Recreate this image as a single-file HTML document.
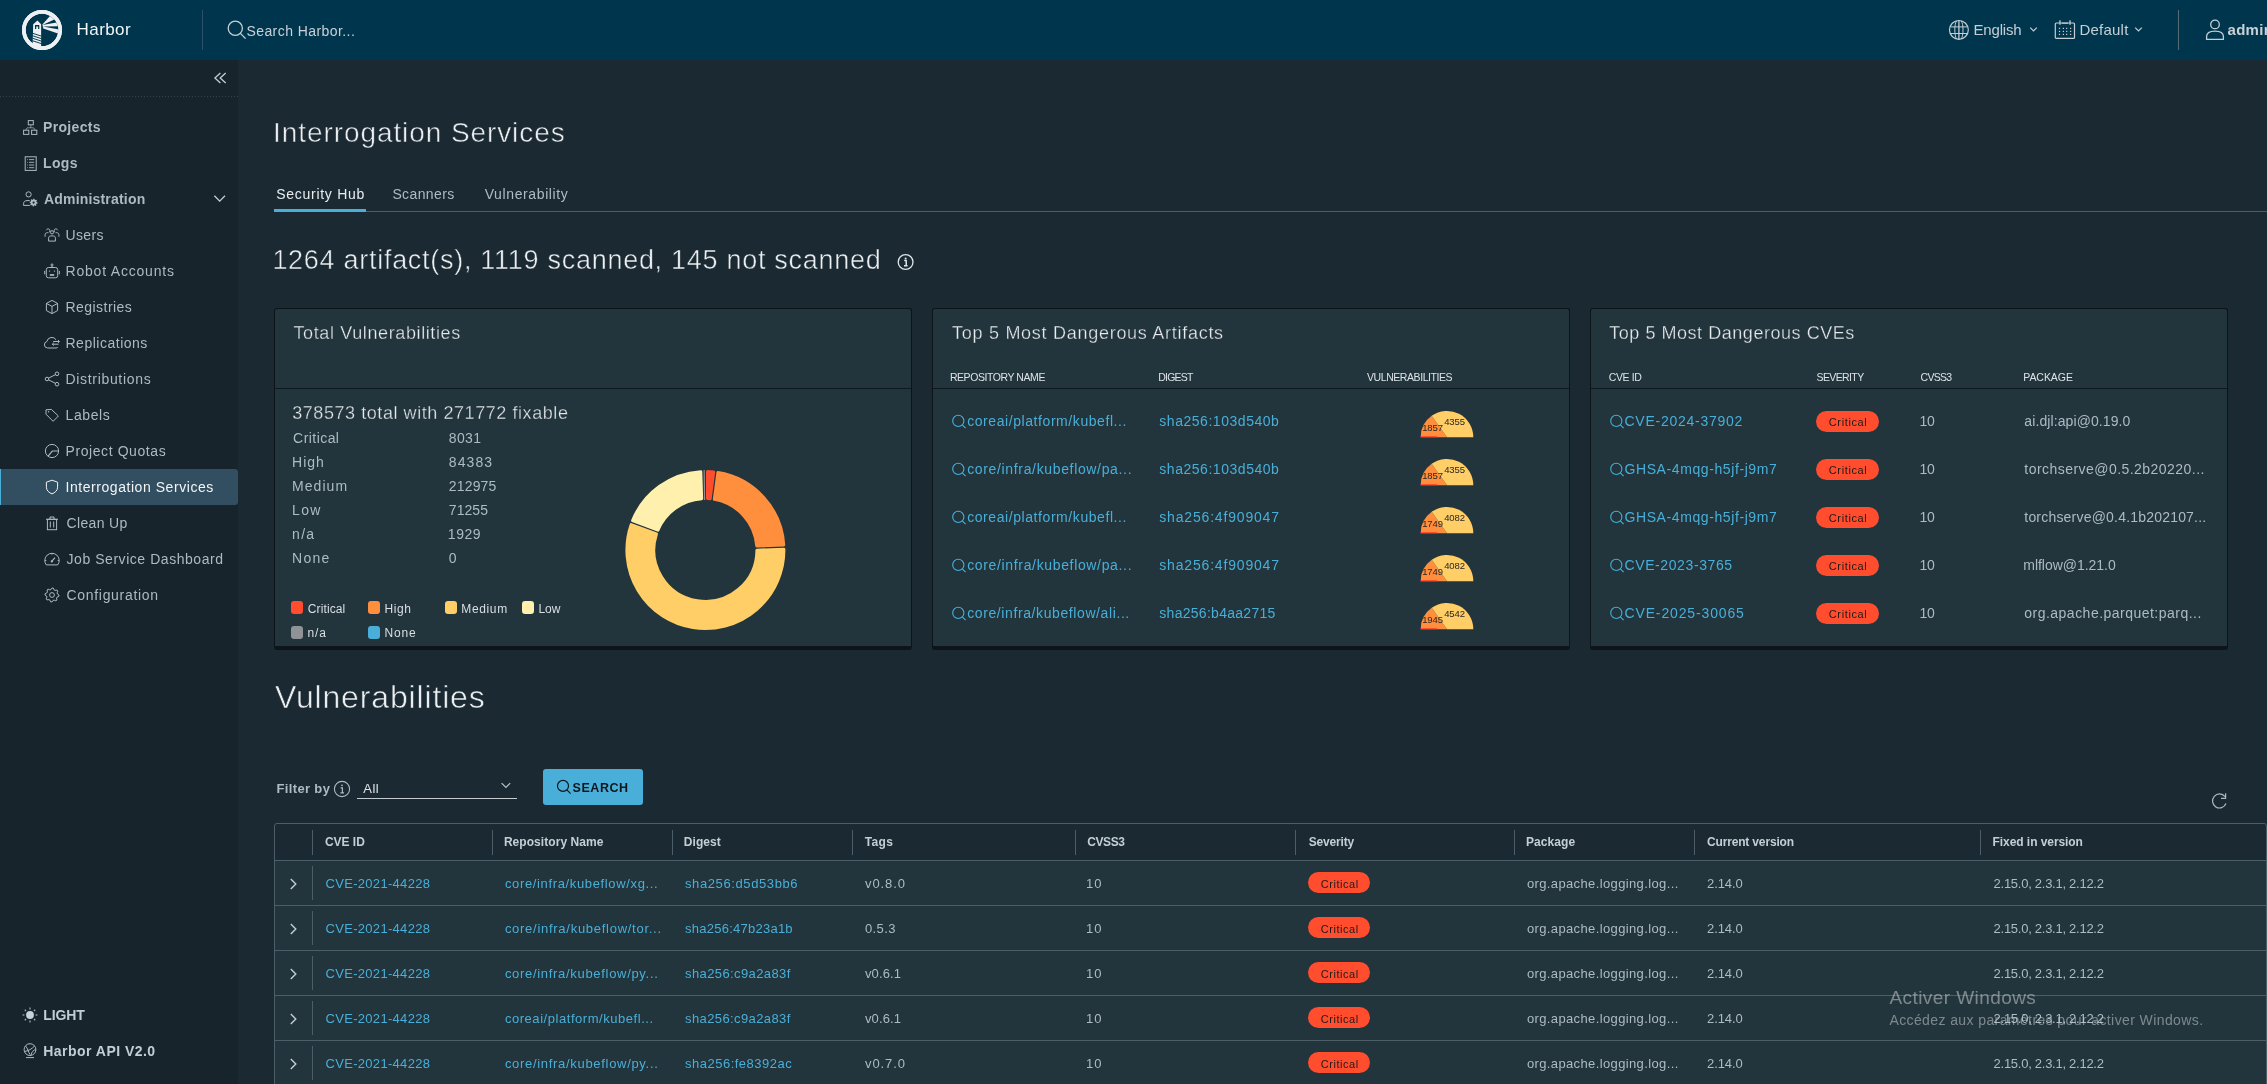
<!DOCTYPE html>
<html><head><meta charset="utf-8"><title>Harbor</title>
<style>
*{margin:0;padding:0;box-sizing:border-box}
html,body{width:2267px;height:1084px;overflow:hidden}
body{position:relative;background:#1b2a32;font-family:"Liberation Sans",sans-serif;}
.a{position:absolute;white-space:nowrap;line-height:1}
#root{position:absolute;left:0;top:0;width:2267px;height:1084px;will-change:transform}
svg.a{overflow:visible}
</style></head><body><div id="root">
<div class="a" style="left:0px;top:0px;width:2267px;height:60px;background:#00364d;"></div>
<svg class="a" style="left:22px;top:10px" width="40" height="40" viewBox="0 0 40 40">
<circle cx="20" cy="20" r="18.15" fill="none" stroke="#eef1f4" stroke-width="3.7"/>
<polygon points="15.45,10.6 19.1,14.2 19.1,37.5 10.6,35.5 11.2,14.2" fill="#eef1f4"/>
<path d="M13,15 H17.3 V19.1 H16.1 V16.5 H14.2 V19.1 H13 Z" fill="#00364d"/>
<g stroke="#00364d" stroke-width="0.95">
<line x1="10.4" y1="23.2" x2="19.6" y2="26.2"/><line x1="10.4" y1="25.7" x2="19.6" y2="28.7"/>
<line x1="10.4" y1="28.2" x2="19.6" y2="31.2"/><line x1="10.4" y1="30.7" x2="19.6" y2="33.7"/>
</g>
<path d="M20.4,14.4 L28,6.1 A16.4,16.4 0 0 1 35.9,23.6 L21.3,18.4 Z" fill="#eef1f4"/>
<polygon points="20.5,15.0 32.8,9.2 34.6,12.6" fill="#00364d"/>
<polygon points="20.9,16.6 37,16.3 37,19.5" fill="#00364d"/>
<circle cx="20" cy="20" r="18.15" fill="none" stroke="#eef1f4" stroke-width="3.7"/>
</svg>
<div class="a" style="left:76.60px;top:20.51px;font-size:17px;color:#f3f5f7;letter-spacing:0.400px;">Harbor</div>
<div class="a" style="left:202px;top:10px;width:1px;height:40px;background:#2e4e6e;"></div>
<svg class="a" style="left:226px;top:19px" width="22" height="22" viewBox="0 0 22 22">
<circle cx="9.3" cy="9.3" r="7.1" fill="none" stroke="#c9d1d6" stroke-width="1.3"/>
<line x1="14.4" y1="14.4" x2="19.6" y2="19.6" stroke="#c9d1d6" stroke-width="1.3"/>
</svg>
<div class="a" style="left:246.40px;top:23.75px;font-size:14px;color:#c9d1d6;letter-spacing:0.433px;">Search Harbor...</div>
<svg class="a" style="left:1948px;top:19px" width="22" height="22" viewBox="0 0 22 22">
<circle cx="10.9" cy="10.9" r="9.4" fill="none" stroke="#c5ced4" stroke-width="1.2"/>
<path d="M8.6,1.8 C6.2,5 6.2,16.8 8.6,20" fill="none" stroke="#c5ced4" stroke-width="1.0"/>
<path d="M13.2,1.8 C15.6,5 15.6,16.8 13.2,20" fill="none" stroke="#c5ced4" stroke-width="1.0"/>
<line x1="10.9" y1="1.5" x2="10.9" y2="20.3" stroke="#c5ced4" stroke-width="1.3"/>
<line x1="2.4" y1="7.9" x2="19.4" y2="7.9" stroke="#c5ced4" stroke-width="1"/>
<line x1="2.4" y1="14.5" x2="19.4" y2="14.5" stroke="#c5ced4" stroke-width="1"/>
</svg>
<div class="a" style="left:1973.50px;top:22.30px;font-size:15px;color:#c5ced4;letter-spacing:-0.183px;">English</div>
<svg class="a" style="left:2029px;top:26px" width="10" height="8"><polyline points="1.2,1.6 4.5,4.9 7.8,1.6" fill="none" stroke="#c5ced4" stroke-width="1.2"/></svg>
<svg class="a" style="left:2054px;top:19px" width="22" height="22" viewBox="0 0 22 22">
<rect x="1.3" y="4.0" width="19.2" height="15.4" rx="1" fill="none" stroke="#c5ced4" stroke-width="1.2"/>
<line x1="6" y1="1.2" x2="6" y2="5.8" stroke="#c5ced4" stroke-width="1.3"/>
<line x1="16" y1="1.2" x2="16" y2="5.8" stroke="#c5ced4" stroke-width="1.3"/>
<line x1="7.9" y1="4.2" x2="14" y2="4.2" stroke="#c5ced4" stroke-width="1.1"/>
<g fill="#c5ced4">
<rect x="4.9" y="8.8" width="1.2" height="1.2"/><rect x="8.8" y="8.8" width="1.2" height="1.2"/><rect x="12.1" y="8.8" width="1.2" height="1.2"/><rect x="16" y="8.8" width="1.2" height="1.2"/>
<rect x="4.9" y="11.8" width="1.2" height="1.2"/><rect x="8.8" y="11.8" width="1.2" height="1.2"/><rect x="12.1" y="11.8" width="1.2" height="1.2"/><rect x="16" y="11.8" width="1.2" height="1.2"/>
<rect x="4.9" y="14.8" width="1.2" height="1.2"/><rect x="8.8" y="14.8" width="1.2" height="1.2"/><rect x="12.1" y="14.8" width="1.2" height="1.2"/><rect x="16" y="14.8" width="1.2" height="1.2"/>
</g>
</svg>
<div class="a" style="left:2079.50px;top:22.30px;font-size:15px;color:#c5ced4;letter-spacing:0.217px;">Default</div>
<svg class="a" style="left:2134px;top:26px" width="10" height="8"><polyline points="1.2,1.6 4.5,4.9 7.8,1.6" fill="none" stroke="#c5ced4" stroke-width="1.2"/></svg>
<div class="a" style="left:2178px;top:10px;width:1px;height:40px;background:#566a78;"></div>
<svg class="a" style="left:2205px;top:19px" width="22" height="22" viewBox="0 0 22 22">
<circle cx="10" cy="5.4" r="4.3" fill="none" stroke="#c5ced4" stroke-width="1.3"/>
<path d="M1.6,20.4 V17.6 C1.6,13.8 5.2,12.2 10,12.2 C14.8,12.2 18.4,13.8 18.4,17.6 V20.4 Z" fill="none" stroke="#c5ced4" stroke-width="1.3" stroke-linejoin="round"/>
</svg>
<div class="a" style="left:2227.50px;top:22.30px;font-size:15px;color:#c9d1d6;letter-spacing:0.300px;font-weight:bold;">admin</div>
<div class="a" style="left:0px;top:60px;width:238px;height:1024px;background:#17242b;"></div>
<svg class="a" style="left:212px;top:71px" width="16" height="14"><polyline points="8.4,1.9 2.9,6.9 8.4,11.9" fill="none" stroke="#c5ced4" stroke-width="1.3"/><polyline points="13.7,1.9 8.2,6.9 13.7,11.9" fill="none" stroke="#c5ced4" stroke-width="1.3"/></svg>
<div class="a" style="left:0;top:96px;width:238px;height:1px;background-image:linear-gradient(90deg,#34444e 50%,transparent 50%);background-size:3px 1px"></div>
<svg class="a" style="left:22.7px;top:119.6px" width="16" height="16" viewBox="0 0 16 16" fill="none" stroke="#acbac3" stroke-width="1.0"><rect x="5.3" y="0.6" width="5" height="4.2"/><rect x="0.6" y="10.2" width="5.2" height="4.2"/><rect x="8.6" y="10.2" width="5.2" height="4.2"/><path d="M2.6,10.2 L4.2,7.8 H10.6 L12.2,10.2 M7.8,4.8 V7.8" stroke-width="0.7"/></svg>
<div class="a" style="left:43.00px;top:119.95px;font-size:14px;color:#acbac3;letter-spacing:0.329px;font-weight:bold;">Projects</div>
<svg class="a" style="left:23.0px;top:155.6px" width="16" height="16" viewBox="0 0 16 16" fill="none" stroke="#acbac3" stroke-width="1.0"><rect x="2.2" y="0.8" width="11" height="13.6"/><g stroke-width="0.9"><line x1="4.3" y1="3.6" x2="5" y2="3.6"/><line x1="6" y1="3.6" x2="11.2" y2="3.6"/><line x1="4.3" y1="6.3" x2="5" y2="6.3"/><line x1="6" y1="6.3" x2="11.2" y2="6.3"/><line x1="4.3" y1="9" x2="5" y2="9"/><line x1="6" y1="9" x2="11.2" y2="9"/><line x1="4.3" y1="11.7" x2="5" y2="11.7"/><line x1="6" y1="11.7" x2="11.2" y2="11.7"/></g></svg>
<div class="a" style="left:43.00px;top:156.15px;font-size:14px;color:#acbac3;letter-spacing:0.333px;font-weight:bold;">Logs</div>
<svg class="a" style="left:22.7px;top:191.0px" width="16" height="16" viewBox="0 0 16 16" fill="none" stroke="#acbac3" stroke-width="1.0"><circle cx="5.6" cy="3.4" r="2.6"/><path d="M6.8,14.4 H0.6 V12.6 C0.6,10.6 2,9.6 4,9.6 H6.8"/><polygon points="14.60,11.60 14.52,12.38 13.37,12.75 13.09,13.27 13.43,14.43 12.82,14.93 11.75,14.37 11.19,14.54 10.60,15.60 9.82,15.52 9.45,14.37 8.93,14.09 7.77,14.43 7.27,13.82 7.83,12.75 7.66,12.19 6.60,11.60 6.68,10.82 7.83,10.45 8.11,9.93 7.77,8.77 8.38,8.27 9.45,8.83 10.01,8.66 10.60,7.60 11.38,7.68 11.75,8.83 12.27,9.11 13.43,8.77 13.93,9.38 13.37,10.45 13.54,11.01" fill="#acbac3" stroke="none"/><circle cx="10.6" cy="11.6" r="1.1" fill="#17242b" stroke="none"/></svg>
<div class="a" style="left:44.00px;top:192.25px;font-size:14px;color:#acbac3;letter-spacing:0.185px;font-weight:bold;">Administration</div>
<svg class="a" style="left:212px;top:193px" width="16" height="12"><polyline points="2.4,2.8 7.7,8.1 13,2.8" fill="none" stroke="#c5ced4" stroke-width="1.3"/></svg>
<svg class="a" style="left:44px;top:227px" width="16" height="16" viewBox="0 0 16 16" fill="none" stroke="#acbac3" stroke-width="1.0"><circle cx="8" cy="5.3" r="1.6"/><path d="M4.6,14.1 V11.2 C4.6,9.7 5.5,8.9 6.8,8.9 H9.2 C10.5,8.9 11.4,9.7 11.4,11.2 V14.1 Z"/><path d="M2.4,3.2 A1.8,1.8 0 1 1 4.9,5.3"/><path d="M13.6,3.2 A1.8,1.8 0 1 0 11.1,5.3"/><path d="M1.1,9.7 V7.6 C1.1,6.4 2.1,5.7 3.3,5.7 H4.4"/><path d="M14.9,9.7 V7.6 C14.9,6.4 13.9,5.7 12.7,5.7 H11.6"/></svg>
<div class="a" style="left:65.50px;top:228.05px;font-size:14px;color:#acbac3;letter-spacing:0.375px;">Users</div>
<svg class="a" style="left:44px;top:263px" width="16" height="16" viewBox="0 0 16 16" fill="none" stroke="#acbac3" stroke-width="1.0"><rect x="2.3" y="4.5" width="11.4" height="10.3" rx="2.2"/><line x1="8" y1="2.9" x2="8" y2="4.5"/><circle cx="8" cy="1.9" r="1"/><circle cx="5.5" cy="8.1" r="0.7" fill="#acbac3" stroke="none"/><circle cx="10.5" cy="8.1" r="0.7" fill="#acbac3" stroke="none"/><rect x="5.8" y="11.1" width="4.4" height="1.7" fill="#acbac3" stroke="none"/><line x1="0.7" y1="7.8" x2="0.7" y2="11.3"/><line x1="15.3" y1="7.8" x2="15.3" y2="11.3"/></svg>
<div class="a" style="left:65.50px;top:264.05px;font-size:14px;color:#acbac3;letter-spacing:0.800px;">Robot Accounts</div>
<svg class="a" style="left:44px;top:299px" width="16" height="16" viewBox="0 0 16 16" fill="none" stroke="#acbac3" stroke-width="1.0"><polygon points="8,1.4 13.6,4.4 13.6,11.6 8,14.6 2.4,11.6 2.4,4.4"/><polyline points="2.4,4.4 8,7.4 13.6,4.4"/><line x1="8" y1="7.4" x2="8" y2="14.6"/></svg>
<div class="a" style="left:65.50px;top:300.05px;font-size:14px;color:#acbac3;letter-spacing:0.456px;">Registries</div>
<svg class="a" style="left:44px;top:335px" width="16" height="16" viewBox="0 0 16 16" fill="none" stroke="#acbac3" stroke-width="1.0"><path d="M13.8,12.1 Q13.3,13 12.1,13 H3.6 A3.3,3.3 0 0 1 2.9,6.5 A5,5 0 0 1 12.1,4.8"/><line x1="9.2" y1="6.5" x2="15.4" y2="6.5"/><polyline points="13.9,5.1 15.4,6.5 13.9,7.9"/><line x1="14.6" y1="9.2" x2="8.3" y2="9.2"/><polyline points="9.8,7.8 8.3,9.2 9.8,10.6"/></svg>
<div class="a" style="left:65.50px;top:336.05px;font-size:14px;color:#acbac3;letter-spacing:0.509px;">Replications</div>
<svg class="a" style="left:44px;top:371px" width="16" height="16" viewBox="0 0 16 16" fill="none" stroke="#acbac3" stroke-width="1.0"><circle cx="3" cy="8" r="1.8"/><circle cx="13" cy="2.8" r="1.8"/><circle cx="13" cy="13.2" r="1.8"/><line x1="4.6" y1="7.1" x2="11.4" y2="3.7"/><line x1="4.6" y1="8.9" x2="11.4" y2="12.3"/></svg>
<div class="a" style="left:65.50px;top:372.05px;font-size:14px;color:#acbac3;letter-spacing:0.675px;">Distributions</div>
<svg class="a" style="left:44px;top:407px" width="16" height="16" viewBox="0 0 16 16" fill="none" stroke="#acbac3" stroke-width="1.0"><path d="M2,2.8 L7.3,2.4 L14.4,9 L9.1,14.3 L2,7.2 Z" stroke-linejoin="round"/><circle cx="4.6" cy="4.8" r="0.7" fill="#acbac3" stroke="none"/></svg>
<div class="a" style="left:65.50px;top:408.05px;font-size:14px;color:#acbac3;letter-spacing:0.600px;">Labels</div>
<svg class="a" style="left:44px;top:443px" width="16" height="16" viewBox="0 0 16 16" fill="none" stroke="#acbac3" stroke-width="1.0"><circle cx="8" cy="8" r="6.6"/><path d="M3.9,13.3 L8.3,8 H14.6" stroke-width="1.2"/></svg>
<div class="a" style="left:65.50px;top:444.05px;font-size:14px;color:#acbac3;letter-spacing:0.585px;">Project Quotas</div>
<div class="a" style="left:0px;top:469px;width:238px;height:36px;background:#324f61;border-radius:0 3px 3px 0;"></div>
<div class="a" style="left:0px;top:469px;width:1px;height:36px;background:#49afd9;"></div>
<svg class="a" style="left:44px;top:479px" width="16" height="16" viewBox="0 0 16 16" fill="none" stroke="#f2f4f6" stroke-width="1.0"><path d="M8,1.2 L13.6,3.2 V8.2 C13.6,11.6 10.8,13.8 8,14.9 C5.2,13.8 2.4,11.6 2.4,8.2 V3.2 Z" stroke-linejoin="round"/></svg>
<div class="a" style="left:65.50px;top:480.05px;font-size:14px;color:#f2f4f6;letter-spacing:0.552px;">Interrogation Services</div>
<svg class="a" style="left:44px;top:515px" width="16" height="16" viewBox="0 0 16 16" fill="none" stroke="#acbac3" stroke-width="1.0"><rect x="3.4" y="4.3" width="9.2" height="10.4"/><line x1="2" y1="4.3" x2="14" y2="4.3"/><polyline points="6,4.3 6,2 10,2 10,4.3"/><line x1="6.3" y1="6.5" x2="6.3" y2="12.5"/><line x1="9.7" y1="6.5" x2="9.7" y2="12.5"/></svg>
<div class="a" style="left:66.50px;top:516.05px;font-size:14px;color:#acbac3;letter-spacing:0.357px;">Clean Up</div>
<svg class="a" style="left:44px;top:551px" width="16" height="16" viewBox="0 0 16 16" fill="none" stroke="#acbac3" stroke-width="1.0"><path d="M2.3,13.9 A7.2,7.2 0 1 1 13.7,13.9 Z" stroke-linejoin="round"/><line x1="7.8" y1="10.4" x2="10.9" y2="6.6" stroke-width="1.2"/><circle cx="7.8" cy="10.4" r="1.1" fill="#acbac3" stroke="none"/><line x1="8" y1="2.4" x2="8" y2="3.6"/><line x1="1.1" y1="9.5" x2="2.3" y2="9.5"/><line x1="13.7" y1="9.5" x2="14.9" y2="9.5"/></svg>
<div class="a" style="left:66.50px;top:552.05px;font-size:14px;color:#acbac3;letter-spacing:0.550px;">Job Service Dashboard</div>
<svg class="a" style="left:44px;top:587px" width="16" height="16" viewBox="0 0 16 16" fill="none" stroke="#acbac3" stroke-width="1.0"><polygon points="15.00,8.00 14.87,9.37 13.08,10.10 12.57,11.06 12.95,12.95 11.89,13.82 10.10,13.08 9.07,13.39 8.00,15.00 6.63,14.87 5.90,13.08 4.94,12.57 3.05,12.95 2.18,11.89 2.92,10.10 2.61,9.07 1.00,8.00 1.13,6.63 2.92,5.90 3.43,4.94 3.05,3.05 4.11,2.18 5.90,2.92 6.93,2.61 8.00,1.00 9.37,1.13 10.10,2.92 11.06,3.43 12.95,3.05 13.82,4.11 13.08,5.90 13.39,6.93" stroke-linejoin="round"/><circle cx="8" cy="8" r="2.4"/></svg>
<div class="a" style="left:66.50px;top:588.05px;font-size:14px;color:#acbac3;letter-spacing:0.692px;">Configuration</div>
<svg class="a" style="left:22px;top:1007px" width="16" height="16" viewBox="0 0 16 16" fill="none" stroke="#9fb0ba" stroke-width="1.2"><circle cx="8" cy="8" r="3.9" fill="#c8d3d9" stroke="none"/><line x1="13.60" y1="8.00" x2="15.40" y2="8.00"/><line x1="11.96" y1="11.96" x2="13.23" y2="13.23"/><line x1="8.00" y1="13.60" x2="8.00" y2="15.40"/><line x1="4.04" y1="11.96" x2="2.77" y2="13.23"/><line x1="2.40" y1="8.00" x2="0.60" y2="8.00"/><line x1="4.04" y1="4.04" x2="2.77" y2="2.77"/><line x1="8.00" y1="2.40" x2="8.00" y2="0.60"/><line x1="11.96" y1="4.04" x2="13.23" y2="2.77"/></svg>
<div class="a" style="left:43.30px;top:1008.35px;font-size:14px;color:#c3ced4;letter-spacing:-0.150px;font-weight:bold;">LIGHT</div>
<svg class="a" style="left:22px;top:1043px" width="16" height="16" viewBox="0 0 16 16" fill="none" stroke="#acbac3" stroke-width="1.0"><circle cx="8" cy="6.6" r="5.9"/><path d="M3.5,3 C6,5.5 6,8.5 8,11.5"/><path d="M2.5,8.5 C6,8 10,6 12.5,3"/><path d="M9,12.3 C9.5,9 11.5,7 13.8,6.5"/><line x1="4" y1="14.6" x2="12" y2="14.6"/></svg>
<div class="a" style="left:43.30px;top:1044.15px;font-size:14px;color:#c3ced4;letter-spacing:0.464px;font-weight:bold;">Harbor API V2.0</div>
<div class="a" style="left:273.10px;top:118.90px;font-size:28px;color:#eceff1;letter-spacing:0.914px;-webkit-text-stroke:0.55px #1b2a32;">Interrogation Services</div>
<div class="a" style="left:276.20px;top:187.45px;font-size:14px;color:#e9ecef;letter-spacing:0.727px;">Security Hub</div>
<div class="a" style="left:392.40px;top:187.45px;font-size:14px;color:#adbbc4;letter-spacing:0.386px;">Scanners</div>
<div class="a" style="left:484.70px;top:187.45px;font-size:14px;color:#adbbc4;letter-spacing:0.617px;">Vulnerability</div>
<div class="a" style="left:274px;top:211px;width:1993px;height:1px;background:#4e5d68;"></div>
<div class="a" style="left:274px;top:209px;width:92px;height:3px;background:#49afd9;"></div>
<div class="a" style="left:272.40px;top:247.04px;font-size:27px;color:#eceff1;letter-spacing:0.717px;-webkit-text-stroke:0.5px #1b2a32;">1264 artifact(s), 1119 scanned, 145 not scanned</div>
<svg class="a" style="left:896px;top:253px" width="18" height="18" viewBox="0 0 18 18" fill="none" stroke="#dfe4e8"><circle cx="9.6" cy="9" r="7.4" stroke-width="1.3"/><circle cx="9.6" cy="5.4" r="1" fill="#dfe4e8" stroke="none"/><path d="M8.2,7.6 H10.2 V12.6 M8,12.7 H11.6" stroke-width="1.5"/></svg>
<div class="a" style="left:274px;top:308px;width:638px;height:342px;background:#22343c;border:1px solid #0c1418;border-bottom:4px solid #0d151a;border-radius:3px"></div>
<div class="a" style="left:275px;top:388px;width:636px;height:1px;background:#0f181d;"></div>
<div class="a" style="left:932px;top:308px;width:638px;height:342px;background:#22343c;border:1px solid #0c1418;border-bottom:4px solid #0d151a;border-radius:3px"></div>
<div class="a" style="left:933px;top:388px;width:636px;height:1px;background:#0f181d;"></div>
<div class="a" style="left:1590px;top:308px;width:638px;height:342px;background:#22343c;border:1px solid #0c1418;border-bottom:4px solid #0d151a;border-radius:3px"></div>
<div class="a" style="left:1591px;top:388px;width:636px;height:1px;background:#0f181d;"></div>
<div class="a" style="left:293.50px;top:323.66px;font-size:18px;color:#e9ecef;letter-spacing:0.615px;-webkit-text-stroke:0.3px #22343c;">Total Vulnerabilities</div>
<div class="a" style="left:952.00px;top:323.96px;font-size:18px;color:#e9ecef;letter-spacing:0.724px;-webkit-text-stroke:0.3px #22343c;">Top 5 Most Dangerous Artifacts</div>
<div class="a" style="left:1609.20px;top:324.26px;font-size:18px;color:#e9ecef;letter-spacing:0.542px;-webkit-text-stroke:0.3px #22343c;">Top 5 Most Dangerous CVEs</div>
<div class="a" style="left:292.20px;top:403.96px;font-size:18px;color:#e4e8eb;letter-spacing:0.565px;-webkit-text-stroke:0.3px #22343c;">378573 total with 271772 fixable</div>
<div class="a" style="left:293.10px;top:431.15px;font-size:14px;color:#adbbc4;letter-spacing:0.443px;">Critical</div>
<div class="a" style="left:448.80px;top:431.15px;font-size:14px;color:#adbbc4;letter-spacing:0.367px;">8031</div>
<div class="a" style="left:292.10px;top:455.15px;font-size:14px;color:#adbbc4;letter-spacing:1.000px;">High</div>
<div class="a" style="left:448.80px;top:455.15px;font-size:14px;color:#adbbc4;letter-spacing:1.075px;">84383</div>
<div class="a" style="left:292.10px;top:479.15px;font-size:14px;color:#adbbc4;letter-spacing:1.040px;">Medium</div>
<div class="a" style="left:448.80px;top:479.15px;font-size:14px;color:#adbbc4;letter-spacing:0.160px;">212975</div>
<div class="a" style="left:292.10px;top:503.15px;font-size:14px;color:#adbbc4;letter-spacing:1.300px;">Low</div>
<div class="a" style="left:448.80px;top:503.15px;font-size:14px;color:#adbbc4;letter-spacing:0.050px;">71255</div>
<div class="a" style="left:292.10px;top:527.15px;font-size:14px;color:#adbbc4;letter-spacing:1.250px;">n/a</div>
<div class="a" style="left:447.80px;top:527.15px;font-size:14px;color:#adbbc4;letter-spacing:0.567px;">1929</div>
<div class="a" style="left:292.10px;top:551.15px;font-size:14px;color:#adbbc4;letter-spacing:1.267px;">None</div>
<div class="a" style="left:448.80px;top:551.15px;font-size:14px;color:#adbbc4;">0</div>
<div class="a" style="left:291px;top:601px;width:12.3px;height:12.5px;background:#ff4d2e;border-radius:3px;"></div>
<div class="a" style="left:307.80px;top:602.64px;font-size:12px;color:#d9dfe3;letter-spacing:0.114px;">Critical</div>
<div class="a" style="left:368px;top:601px;width:12.3px;height:12.5px;background:#ff8f3d;border-radius:3px;"></div>
<div class="a" style="left:384.50px;top:602.64px;font-size:12px;color:#d9dfe3;letter-spacing:0.600px;">High</div>
<div class="a" style="left:445px;top:601px;width:12.3px;height:12.5px;background:#ffce66;border-radius:3px;"></div>
<div class="a" style="left:461.30px;top:602.64px;font-size:12px;color:#d9dfe3;letter-spacing:0.640px;">Medium</div>
<div class="a" style="left:522px;top:601px;width:12.3px;height:12.5px;background:#fff1ad;border-radius:3px;"></div>
<div class="a" style="left:538.40px;top:602.64px;font-size:12px;color:#d9dfe3;letter-spacing:0.050px;">Low</div>
<div class="a" style="left:291px;top:626px;width:12.3px;height:12.5px;background:#8f9397;border-radius:3px;"></div>
<div class="a" style="left:307.50px;top:627.44px;font-size:12px;color:#d9dfe3;letter-spacing:0.900px;">n/a</div>
<div class="a" style="left:368px;top:626px;width:12.3px;height:12.5px;background:#49afd9;border-radius:3px;"></div>
<div class="a" style="left:384.50px;top:627.44px;font-size:12px;color:#d9dfe3;letter-spacing:0.833px;">None</div>
<svg class="a" style="left:0;top:0" width="2267" height="1084"><path d="M707.50,471.53 A78.5,78.5 0 0 1 713.75,471.95 L710.16,498.72 A51.5,51.5 0 0 0 707.50,498.54 Z" fill="#ff4d2e" stroke="#ff4d2e" stroke-width="3.0" stroke-linejoin="round"/><path d="M717.91,472.50 A78.5,78.5 0 0 1 783.74,545.00 L756.74,546.00 A51.5,51.5 0 0 0 714.32,499.28 Z" fill="#ff8f3d" stroke="#ff8f3d" stroke-width="3.0" stroke-linejoin="round"/><path d="M783.90,549.20 A78.5,78.5 0 1 1 631.12,524.61 L656.44,534.03 A51.5,51.5 0 1 0 756.90,550.19 Z" fill="#ffce66" stroke="#ffce66" stroke-width="3.0" stroke-linejoin="round"/><path d="M632.58,520.67 A78.5,78.5 0 0 1 700.79,471.64 L701.65,498.64 A51.5,51.5 0 0 0 657.90,530.09 Z" fill="#fff1ad" stroke="#fff1ad" stroke-width="3.0" stroke-linejoin="round"/><line x1="704.12" y1="470.01" x2="704.60" y2="500.01" stroke="#8f9397" stroke-width="1.2"/></svg>
<div class="a" style="left:949.90px;top:372.11px;font-size:10.5px;color:#dde3e7;letter-spacing:-0.429px;">REPOSITORY NAME</div>
<div class="a" style="left:1158.30px;top:372.11px;font-size:10.5px;color:#dde3e7;letter-spacing:-0.780px;">DIGEST</div>
<div class="a" style="left:1367.00px;top:372.11px;font-size:10.5px;color:#dde3e7;letter-spacing:-0.429px;">VULNERABILITIES</div>
<svg class="a" style="left:952px;top:414.0px" width="16" height="16" viewBox="0 0 16 16" fill="none" stroke="#49afd9" stroke-width="1.1"><circle cx="6.3" cy="6.9" r="5.6"/><line x1="10.3" y1="10.9" x2="13.6" y2="14.2"/></svg>
<div class="a" style="left:967.20px;top:414.15px;font-size:14px;color:#49afd9;letter-spacing:0.571px;">coreai/platform/kubefl...</div>
<div class="a" style="left:1159.30px;top:414.15px;font-size:14px;color:#49afd9;letter-spacing:0.536px;">sha256:103d540b</div>
<svg class="a" style="left:0;top:0" width="2267" height="1084"><path d="M1447.00,437.20 L1420.70,437.20 A26.3,26.3 0 0 1 1431.64,415.85 Z" fill="#ff8f3d"/><path d="M1447.00,437.20 L1431.64,415.85 A26.3,26.3 0 0 1 1473.30,437.20 Z" fill="#ffce66"/><rect x="1420.7" y="436.0" width="16.3" height="1.2" fill="#ff4d2e"/></svg>
<div class="a" style="left:1422.20px;top:423.36px;font-size:9.5px;color:#2e2620;letter-spacing:-0.100px;">1857</div>
<div class="a" style="left:1444.20px;top:417.16px;font-size:9.5px;color:#2e2620;letter-spacing:-0.100px;">4355</div>
<svg class="a" style="left:952px;top:462.0px" width="16" height="16" viewBox="0 0 16 16" fill="none" stroke="#49afd9" stroke-width="1.1"><circle cx="6.3" cy="6.9" r="5.6"/><line x1="10.3" y1="10.9" x2="13.6" y2="14.2"/></svg>
<div class="a" style="left:967.20px;top:462.15px;font-size:14px;color:#49afd9;letter-spacing:0.654px;">core/infra/kubeflow/pa...</div>
<div class="a" style="left:1159.30px;top:462.15px;font-size:14px;color:#49afd9;letter-spacing:0.536px;">sha256:103d540b</div>
<svg class="a" style="left:0;top:0" width="2267" height="1084"><path d="M1447.00,485.20 L1420.70,485.20 A26.3,26.3 0 0 1 1431.64,463.85 Z" fill="#ff8f3d"/><path d="M1447.00,485.20 L1431.64,463.85 A26.3,26.3 0 0 1 1473.30,485.20 Z" fill="#ffce66"/><rect x="1420.7" y="484.0" width="16.3" height="1.2" fill="#ff4d2e"/></svg>
<div class="a" style="left:1422.20px;top:471.36px;font-size:9.5px;color:#2e2620;letter-spacing:-0.100px;">1857</div>
<div class="a" style="left:1444.20px;top:465.16px;font-size:9.5px;color:#2e2620;letter-spacing:-0.100px;">4355</div>
<svg class="a" style="left:952px;top:510.0px" width="16" height="16" viewBox="0 0 16 16" fill="none" stroke="#49afd9" stroke-width="1.1"><circle cx="6.3" cy="6.9" r="5.6"/><line x1="10.3" y1="10.9" x2="13.6" y2="14.2"/></svg>
<div class="a" style="left:967.20px;top:510.15px;font-size:14px;color:#49afd9;letter-spacing:0.571px;">coreai/platform/kubefl...</div>
<div class="a" style="left:1159.30px;top:510.15px;font-size:14px;color:#49afd9;letter-spacing:0.821px;">sha256:4f909047</div>
<svg class="a" style="left:0;top:0" width="2267" height="1084"><path d="M1447.00,533.20 L1420.70,533.20 A26.3,26.3 0 0 1 1431.70,511.81 Z" fill="#ff8f3d"/><path d="M1447.00,533.20 L1431.70,511.81 A26.3,26.3 0 0 1 1473.30,533.20 Z" fill="#ffce66"/><rect x="1420.7" y="532.0" width="16.3" height="1.2" fill="#ff4d2e"/></svg>
<div class="a" style="left:1422.20px;top:519.36px;font-size:9.5px;color:#2e2620;letter-spacing:-0.100px;">1749</div>
<div class="a" style="left:1444.20px;top:513.16px;font-size:9.5px;color:#2e2620;letter-spacing:-0.100px;">4082</div>
<svg class="a" style="left:952px;top:558.0px" width="16" height="16" viewBox="0 0 16 16" fill="none" stroke="#49afd9" stroke-width="1.1"><circle cx="6.3" cy="6.9" r="5.6"/><line x1="10.3" y1="10.9" x2="13.6" y2="14.2"/></svg>
<div class="a" style="left:967.20px;top:558.15px;font-size:14px;color:#49afd9;letter-spacing:0.654px;">core/infra/kubeflow/pa...</div>
<div class="a" style="left:1159.30px;top:558.15px;font-size:14px;color:#49afd9;letter-spacing:0.821px;">sha256:4f909047</div>
<svg class="a" style="left:0;top:0" width="2267" height="1084"><path d="M1447.00,581.20 L1420.70,581.20 A26.3,26.3 0 0 1 1431.70,559.81 Z" fill="#ff8f3d"/><path d="M1447.00,581.20 L1431.70,559.81 A26.3,26.3 0 0 1 1473.30,581.20 Z" fill="#ffce66"/><rect x="1420.7" y="580.0" width="16.3" height="1.2" fill="#ff4d2e"/></svg>
<div class="a" style="left:1422.20px;top:567.36px;font-size:9.5px;color:#2e2620;letter-spacing:-0.100px;">1749</div>
<div class="a" style="left:1444.20px;top:561.16px;font-size:9.5px;color:#2e2620;letter-spacing:-0.100px;">4082</div>
<svg class="a" style="left:952px;top:606.0px" width="16" height="16" viewBox="0 0 16 16" fill="none" stroke="#49afd9" stroke-width="1.1"><circle cx="6.3" cy="6.9" r="5.6"/><line x1="10.3" y1="10.9" x2="13.6" y2="14.2"/></svg>
<div class="a" style="left:967.20px;top:606.15px;font-size:14px;color:#49afd9;letter-spacing:0.600px;">core/infra/kubeflow/ali...</div>
<div class="a" style="left:1159.30px;top:606.15px;font-size:14px;color:#49afd9;letter-spacing:0.279px;">sha256:b4aa2715</div>
<svg class="a" style="left:0;top:0" width="2267" height="1084"><path d="M1447.00,629.20 L1420.70,629.20 A26.3,26.3 0 0 1 1431.70,607.81 Z" fill="#ff8f3d"/><path d="M1447.00,629.20 L1431.70,607.81 A26.3,26.3 0 0 1 1473.30,629.20 Z" fill="#ffce66"/><rect x="1420.7" y="628.0" width="16.3" height="1.2" fill="#ff4d2e"/></svg>
<div class="a" style="left:1422.20px;top:615.36px;font-size:9.5px;color:#2e2620;letter-spacing:-0.100px;">1945</div>
<div class="a" style="left:1444.20px;top:609.16px;font-size:9.5px;color:#2e2620;letter-spacing:-0.100px;">4542</div>
<div class="a" style="left:1608.80px;top:372.11px;font-size:10.5px;color:#dde3e7;letter-spacing:-0.380px;">CVE ID</div>
<div class="a" style="left:1816.50px;top:372.11px;font-size:10.5px;color:#dde3e7;letter-spacing:-0.614px;">SEVERITY</div>
<div class="a" style="left:1920.50px;top:372.11px;font-size:10.5px;color:#dde3e7;letter-spacing:-0.700px;">CVSS3</div>
<div class="a" style="left:2023.20px;top:372.11px;font-size:10.5px;color:#dde3e7;letter-spacing:-0.033px;">PACKAGE</div>
<svg class="a" style="left:1610px;top:414.0px" width="16" height="16" viewBox="0 0 16 16" fill="none" stroke="#49afd9" stroke-width="1.1"><circle cx="6.3" cy="6.9" r="5.6"/><line x1="10.3" y1="10.9" x2="13.6" y2="14.2"/></svg>
<div class="a" style="left:1624.50px;top:414.15px;font-size:14px;color:#49afd9;letter-spacing:0.746px;">CVE-2024-37902</div>
<div class="a" style="left:1816px;top:411px;width:63px;height:21px;border-radius:11px;background:#ff4d2e"></div>
<div class="a" style="left:1828.80px;top:416.69px;font-size:11px;color:#1f1a1a;letter-spacing:0.629px;">Critical</div>
<div class="a" style="left:1919.40px;top:414.15px;font-size:14px;color:#adbbc4;letter-spacing:-0.100px;">10</div>
<div class="a" style="left:2024.30px;top:414.15px;font-size:14px;color:#adbbc4;letter-spacing:0.100px;">ai.djl:api@0.19.0</div>
<svg class="a" style="left:1610px;top:462.0px" width="16" height="16" viewBox="0 0 16 16" fill="none" stroke="#49afd9" stroke-width="1.1"><circle cx="6.3" cy="6.9" r="5.6"/><line x1="10.3" y1="10.9" x2="13.6" y2="14.2"/></svg>
<div class="a" style="left:1624.50px;top:462.15px;font-size:14px;color:#49afd9;letter-spacing:0.594px;">GHSA-4mqg-h5jf-j9m7</div>
<div class="a" style="left:1816px;top:459px;width:63px;height:21px;border-radius:11px;background:#ff4d2e"></div>
<div class="a" style="left:1828.80px;top:464.69px;font-size:11px;color:#1f1a1a;letter-spacing:0.629px;">Critical</div>
<div class="a" style="left:1919.40px;top:462.15px;font-size:14px;color:#adbbc4;letter-spacing:-0.100px;">10</div>
<div class="a" style="left:2024.30px;top:462.15px;font-size:14px;color:#adbbc4;letter-spacing:0.458px;">torchserve@0.5.2b20220...</div>
<svg class="a" style="left:1610px;top:510.0px" width="16" height="16" viewBox="0 0 16 16" fill="none" stroke="#49afd9" stroke-width="1.1"><circle cx="6.3" cy="6.9" r="5.6"/><line x1="10.3" y1="10.9" x2="13.6" y2="14.2"/></svg>
<div class="a" style="left:1624.50px;top:510.15px;font-size:14px;color:#49afd9;letter-spacing:0.594px;">GHSA-4mqg-h5jf-j9m7</div>
<div class="a" style="left:1816px;top:507px;width:63px;height:21px;border-radius:11px;background:#ff4d2e"></div>
<div class="a" style="left:1828.80px;top:512.69px;font-size:11px;color:#1f1a1a;letter-spacing:0.629px;">Critical</div>
<div class="a" style="left:1919.40px;top:510.15px;font-size:14px;color:#adbbc4;letter-spacing:-0.100px;">10</div>
<div class="a" style="left:2024.30px;top:510.15px;font-size:14px;color:#adbbc4;letter-spacing:0.200px;">torchserve@0.4.1b202107...</div>
<svg class="a" style="left:1610px;top:558.0px" width="16" height="16" viewBox="0 0 16 16" fill="none" stroke="#49afd9" stroke-width="1.1"><circle cx="6.3" cy="6.9" r="5.6"/><line x1="10.3" y1="10.9" x2="13.6" y2="14.2"/></svg>
<div class="a" style="left:1624.50px;top:558.15px;font-size:14px;color:#49afd9;letter-spacing:0.600px;">CVE-2023-3765</div>
<div class="a" style="left:1816px;top:555px;width:63px;height:21px;border-radius:11px;background:#ff4d2e"></div>
<div class="a" style="left:1828.80px;top:560.69px;font-size:11px;color:#1f1a1a;letter-spacing:0.629px;">Critical</div>
<div class="a" style="left:1919.40px;top:558.15px;font-size:14px;color:#adbbc4;letter-spacing:-0.100px;">10</div>
<div class="a" style="left:2023.30px;top:558.15px;font-size:14px;color:#adbbc4;letter-spacing:-0.033px;">mlflow@1.21.0</div>
<svg class="a" style="left:1610px;top:606.0px" width="16" height="16" viewBox="0 0 16 16" fill="none" stroke="#49afd9" stroke-width="1.1"><circle cx="6.3" cy="6.9" r="5.6"/><line x1="10.3" y1="10.9" x2="13.6" y2="14.2"/></svg>
<div class="a" style="left:1624.50px;top:606.15px;font-size:14px;color:#49afd9;letter-spacing:0.862px;">CVE-2025-30065</div>
<div class="a" style="left:1816px;top:603px;width:63px;height:21px;border-radius:11px;background:#ff4d2e"></div>
<div class="a" style="left:1828.80px;top:608.69px;font-size:11px;color:#1f1a1a;letter-spacing:0.629px;">Critical</div>
<div class="a" style="left:1919.40px;top:606.15px;font-size:14px;color:#adbbc4;letter-spacing:-0.100px;">10</div>
<div class="a" style="left:2024.30px;top:606.15px;font-size:14px;color:#adbbc4;letter-spacing:0.480px;">org.apache.parquet:parq...</div>
<div class="a" style="left:274.90px;top:680.61px;font-size:32px;color:#eceff1;letter-spacing:0.843px;-webkit-text-stroke:0.6px #1b2a32;">Vulnerabilities</div>
<div class="a" style="left:276.50px;top:781.60px;font-size:13px;color:#adbbc4;letter-spacing:0.350px;font-weight:bold;">Filter by</div>
<svg class="a" style="left:333px;top:780px" width="18" height="18" viewBox="0 0 18 18" fill="none" stroke="#adbbc4"><circle cx="9" cy="9" r="7.6" stroke-width="1.1"/><circle cx="9" cy="5.3" r="0.9" fill="#adbbc4" stroke="none"/><path d="M7.6,7.8 H9.4 V12.8 M7.4,12.9 H11" stroke-width="1.2"/></svg>
<div class="a" style="left:363.30px;top:781.60px;font-size:13px;color:#dfe4e8;letter-spacing:0.450px;">All</div>
<div class="a" style="left:357px;top:798px;width:160px;height:1px;background:#c3ccd1;"></div>
<svg class="a" style="left:500px;top:781px" width="12" height="10"><polyline points="1.6,2.2 5.9,6.5 10.2,2.2" fill="none" stroke="#b9c3c9" stroke-width="1.2"/></svg>
<div class="a" style="left:543px;top:769px;width:100px;height:36px;background:#49afd9;border-radius:3px;"></div>
<svg class="a" style="left:556px;top:779px" width="18" height="18" viewBox="0 0 18 18" fill="none" stroke="#0f171c" stroke-width="1.2"><circle cx="7.0" cy="6.9" r="5.5"/><line x1="10.9" y1="10.8" x2="14.6" y2="14.6"/></svg>
<div class="a" style="left:572.50px;top:781.62px;font-size:12.5px;color:#0f171c;letter-spacing:0.560px;font-weight:bold;">SEARCH</div>
<svg class="a" style="left:2210px;top:792px" width="20" height="20" viewBox="0 0 20 20" fill="none" stroke="#adbbc4" stroke-width="1.2"><path d="M15.0,4.6 A7.0,7.0 0 1 0 16.0,11.6"/><polyline points="11,6.4 15.6,6.4 15.6,1.2"/></svg>
<div class="a" style="left:274px;top:823px;width:1993px;height:270px;background:#22343c;border:1px solid #4e5e69;border-radius:3px"></div>
<div class="a" style="left:275px;top:824px;width:1991px;height:36px;background:#1b2a32;border-radius:3px 3px 0 0;"></div>
<div class="a" style="left:275px;top:860px;width:1991px;height:1px;background:#4e5e69;"></div>
<div class="a" style="left:275px;top:905px;width:1991px;height:1px;background:#4e5e69;"></div>
<div class="a" style="left:275px;top:950px;width:1991px;height:1px;background:#4e5e69;"></div>
<div class="a" style="left:275px;top:995px;width:1991px;height:1px;background:#4e5e69;"></div>
<div class="a" style="left:275px;top:1040px;width:1991px;height:1px;background:#4e5e69;"></div>
<div class="a" style="left:312px;top:830px;width:1px;height:25px;background:#4e5e69;"></div>
<div class="a" style="left:492px;top:830px;width:1px;height:25px;background:#4e5e69;"></div>
<div class="a" style="left:672px;top:830px;width:1px;height:25px;background:#4e5e69;"></div>
<div class="a" style="left:852px;top:830px;width:1px;height:25px;background:#4e5e69;"></div>
<div class="a" style="left:1075px;top:830px;width:1px;height:25px;background:#4e5e69;"></div>
<div class="a" style="left:1295px;top:830px;width:1px;height:25px;background:#4e5e69;"></div>
<div class="a" style="left:1514px;top:830px;width:1px;height:25px;background:#4e5e69;"></div>
<div class="a" style="left:1694px;top:830px;width:1px;height:25px;background:#4e5e69;"></div>
<div class="a" style="left:1980px;top:830px;width:1px;height:25px;background:#4e5e69;"></div>
<div class="a" style="left:324.90px;top:836.24px;font-size:12px;color:#c5ced4;letter-spacing:-0.020px;font-weight:bold;">CVE ID</div>
<div class="a" style="left:503.90px;top:836.24px;font-size:12px;color:#c5ced4;letter-spacing:0.057px;font-weight:bold;">Repository Name</div>
<div class="a" style="left:683.70px;top:836.24px;font-size:12px;color:#c5ced4;letter-spacing:0.100px;font-weight:bold;">Digest</div>
<div class="a" style="left:864.70px;top:836.24px;font-size:12px;color:#c5ced4;letter-spacing:0.333px;font-weight:bold;">Tags</div>
<div class="a" style="left:1087.20px;top:836.24px;font-size:12px;color:#c5ced4;letter-spacing:-0.375px;font-weight:bold;">CVSS3</div>
<div class="a" style="left:1308.70px;top:836.24px;font-size:12px;color:#c5ced4;letter-spacing:-0.171px;font-weight:bold;">Severity</div>
<div class="a" style="left:1526.00px;top:836.24px;font-size:12px;color:#c5ced4;letter-spacing:0.067px;font-weight:bold;">Package</div>
<div class="a" style="left:1707.00px;top:836.24px;font-size:12px;color:#c5ced4;letter-spacing:-0.164px;font-weight:bold;">Current version</div>
<div class="a" style="left:1992.60px;top:836.24px;font-size:12px;color:#c5ced4;letter-spacing:-0.067px;font-weight:bold;">Fixed in version</div>
<div class="a" style="left:312px;top:866px;width:1px;height:34px;background:#4e5e69;"></div>
<svg class="a" style="left:288px;top:877px" width="12" height="14"><polyline points="2.8,2 7.8,7 2.8,12" fill="none" stroke="#c5ced4" stroke-width="1.4"/></svg>
<div class="a" style="left:325.50px;top:877.00px;font-size:13px;color:#49afd9;letter-spacing:0.308px;">CVE-2021-44228</div>
<div class="a" style="left:504.90px;top:877.00px;font-size:13px;color:#49afd9;letter-spacing:0.646px;">core/infra/kubeflow/xg...</div>
<div class="a" style="left:685.00px;top:877.00px;font-size:13px;color:#49afd9;letter-spacing:0.607px;">sha256:d5d53bb6</div>
<div class="a" style="left:865.00px;top:877.00px;font-size:13px;color:#adbbc4;letter-spacing:0.900px;">v0.8.0</div>
<div class="a" style="left:1086.00px;top:877.00px;font-size:13px;color:#adbbc4;letter-spacing:1.000px;">10</div>
<div class="a" style="left:1308px;top:872px;width:62px;height:21px;border-radius:11px;background:#ff4d2e"></div>
<div class="a" style="left:1320.80px;top:878.69px;font-size:11px;color:#1f1a1a;letter-spacing:0.543px;">Critical</div>
<div class="a" style="left:1526.90px;top:877.00px;font-size:13px;color:#adbbc4;letter-spacing:0.375px;">org.apache.logging.log...</div>
<div class="a" style="left:1707.00px;top:877.00px;font-size:13px;color:#adbbc4;letter-spacing:-0.080px;">2.14.0</div>
<div class="a" style="left:1993.60px;top:877.00px;font-size:13px;color:#adbbc4;letter-spacing:-0.265px;">2.15.0, 2.3.1, 2.12.2</div>
<div class="a" style="left:312px;top:911px;width:1px;height:34px;background:#4e5e69;"></div>
<svg class="a" style="left:288px;top:922px" width="12" height="14"><polyline points="2.8,2 7.8,7 2.8,12" fill="none" stroke="#c5ced4" stroke-width="1.4"/></svg>
<div class="a" style="left:325.50px;top:922.00px;font-size:13px;color:#49afd9;letter-spacing:0.308px;">CVE-2021-44228</div>
<div class="a" style="left:504.90px;top:922.00px;font-size:13px;color:#49afd9;letter-spacing:0.724px;">core/infra/kubeflow/tor...</div>
<div class="a" style="left:685.00px;top:922.00px;font-size:13px;color:#49afd9;letter-spacing:0.250px;">sha256:47b23a1b</div>
<div class="a" style="left:865.00px;top:922.00px;font-size:13px;color:#adbbc4;letter-spacing:0.375px;">0.5.3</div>
<div class="a" style="left:1086.00px;top:922.00px;font-size:13px;color:#adbbc4;letter-spacing:1.000px;">10</div>
<div class="a" style="left:1308px;top:917px;width:62px;height:21px;border-radius:11px;background:#ff4d2e"></div>
<div class="a" style="left:1320.80px;top:923.69px;font-size:11px;color:#1f1a1a;letter-spacing:0.543px;">Critical</div>
<div class="a" style="left:1526.90px;top:922.00px;font-size:13px;color:#adbbc4;letter-spacing:0.375px;">org.apache.logging.log...</div>
<div class="a" style="left:1707.00px;top:922.00px;font-size:13px;color:#adbbc4;letter-spacing:-0.080px;">2.14.0</div>
<div class="a" style="left:1993.60px;top:922.00px;font-size:13px;color:#adbbc4;letter-spacing:-0.265px;">2.15.0, 2.3.1, 2.12.2</div>
<div class="a" style="left:312px;top:956px;width:1px;height:34px;background:#4e5e69;"></div>
<svg class="a" style="left:288px;top:967px" width="12" height="14"><polyline points="2.8,2 7.8,7 2.8,12" fill="none" stroke="#c5ced4" stroke-width="1.4"/></svg>
<div class="a" style="left:325.50px;top:967.00px;font-size:13px;color:#49afd9;letter-spacing:0.308px;">CVE-2021-44228</div>
<div class="a" style="left:504.90px;top:967.00px;font-size:13px;color:#49afd9;letter-spacing:0.692px;">core/infra/kubeflow/py...</div>
<div class="a" style="left:685.00px;top:967.00px;font-size:13px;color:#49afd9;letter-spacing:0.393px;">sha256:c9a2a83f</div>
<div class="a" style="left:865.00px;top:967.00px;font-size:13px;color:#adbbc4;letter-spacing:0.100px;">v0.6.1</div>
<div class="a" style="left:1086.00px;top:967.00px;font-size:13px;color:#adbbc4;letter-spacing:1.000px;">10</div>
<div class="a" style="left:1308px;top:962px;width:62px;height:21px;border-radius:11px;background:#ff4d2e"></div>
<div class="a" style="left:1320.80px;top:968.69px;font-size:11px;color:#1f1a1a;letter-spacing:0.543px;">Critical</div>
<div class="a" style="left:1526.90px;top:967.00px;font-size:13px;color:#adbbc4;letter-spacing:0.375px;">org.apache.logging.log...</div>
<div class="a" style="left:1707.00px;top:967.00px;font-size:13px;color:#adbbc4;letter-spacing:-0.080px;">2.14.0</div>
<div class="a" style="left:1993.60px;top:967.00px;font-size:13px;color:#adbbc4;letter-spacing:-0.265px;">2.15.0, 2.3.1, 2.12.2</div>
<div class="a" style="left:312px;top:1001px;width:1px;height:34px;background:#4e5e69;"></div>
<svg class="a" style="left:288px;top:1012px" width="12" height="14"><polyline points="2.8,2 7.8,7 2.8,12" fill="none" stroke="#c5ced4" stroke-width="1.4"/></svg>
<div class="a" style="left:325.50px;top:1012.00px;font-size:13px;color:#49afd9;letter-spacing:0.308px;">CVE-2021-44228</div>
<div class="a" style="left:504.90px;top:1012.00px;font-size:13px;color:#49afd9;letter-spacing:0.546px;">coreai/platform/kubefl...</div>
<div class="a" style="left:685.00px;top:1012.00px;font-size:13px;color:#49afd9;letter-spacing:0.393px;">sha256:c9a2a83f</div>
<div class="a" style="left:865.00px;top:1012.00px;font-size:13px;color:#adbbc4;letter-spacing:0.100px;">v0.6.1</div>
<div class="a" style="left:1086.00px;top:1012.00px;font-size:13px;color:#adbbc4;letter-spacing:1.000px;">10</div>
<div class="a" style="left:1308px;top:1007px;width:62px;height:21px;border-radius:11px;background:#ff4d2e"></div>
<div class="a" style="left:1320.80px;top:1013.69px;font-size:11px;color:#1f1a1a;letter-spacing:0.543px;">Critical</div>
<div class="a" style="left:1526.90px;top:1012.00px;font-size:13px;color:#adbbc4;letter-spacing:0.375px;">org.apache.logging.log...</div>
<div class="a" style="left:1707.00px;top:1012.00px;font-size:13px;color:#adbbc4;letter-spacing:-0.080px;">2.14.0</div>
<div class="a" style="left:1993.60px;top:1012.00px;font-size:13px;color:#adbbc4;letter-spacing:-0.265px;">2.15.0, 2.3.1, 2.12.2</div>
<div class="a" style="left:312px;top:1046px;width:1px;height:34px;background:#4e5e69;"></div>
<svg class="a" style="left:288px;top:1057px" width="12" height="14"><polyline points="2.8,2 7.8,7 2.8,12" fill="none" stroke="#c5ced4" stroke-width="1.4"/></svg>
<div class="a" style="left:325.50px;top:1057.00px;font-size:13px;color:#49afd9;letter-spacing:0.308px;">CVE-2021-44228</div>
<div class="a" style="left:504.90px;top:1057.00px;font-size:13px;color:#49afd9;letter-spacing:0.692px;">core/infra/kubeflow/py...</div>
<div class="a" style="left:685.00px;top:1057.00px;font-size:13px;color:#49afd9;letter-spacing:0.500px;">sha256:fe8392ac</div>
<div class="a" style="left:865.00px;top:1057.00px;font-size:13px;color:#adbbc4;letter-spacing:0.900px;">v0.7.0</div>
<div class="a" style="left:1086.00px;top:1057.00px;font-size:13px;color:#adbbc4;letter-spacing:1.000px;">10</div>
<div class="a" style="left:1308px;top:1052px;width:62px;height:21px;border-radius:11px;background:#ff4d2e"></div>
<div class="a" style="left:1320.80px;top:1058.69px;font-size:11px;color:#1f1a1a;letter-spacing:0.543px;">Critical</div>
<div class="a" style="left:1526.90px;top:1057.00px;font-size:13px;color:#adbbc4;letter-spacing:0.375px;">org.apache.logging.log...</div>
<div class="a" style="left:1707.00px;top:1057.00px;font-size:13px;color:#adbbc4;letter-spacing:-0.080px;">2.14.0</div>
<div class="a" style="left:1993.60px;top:1057.00px;font-size:13px;color:#adbbc4;letter-spacing:-0.265px;">2.15.0, 2.3.1, 2.12.2</div>
<div class="a" style="left:1889.40px;top:987.52px;font-size:19px;color:rgba(200,205,208,0.55);letter-spacing:0.429px;">Activer Windows</div>
<div class="a" style="left:1889.40px;top:1013.15px;font-size:14px;color:rgba(200,205,208,0.55);letter-spacing:0.400px;">Accédez aux paramètres pour activer Windows.</div>
</div></body></html>
